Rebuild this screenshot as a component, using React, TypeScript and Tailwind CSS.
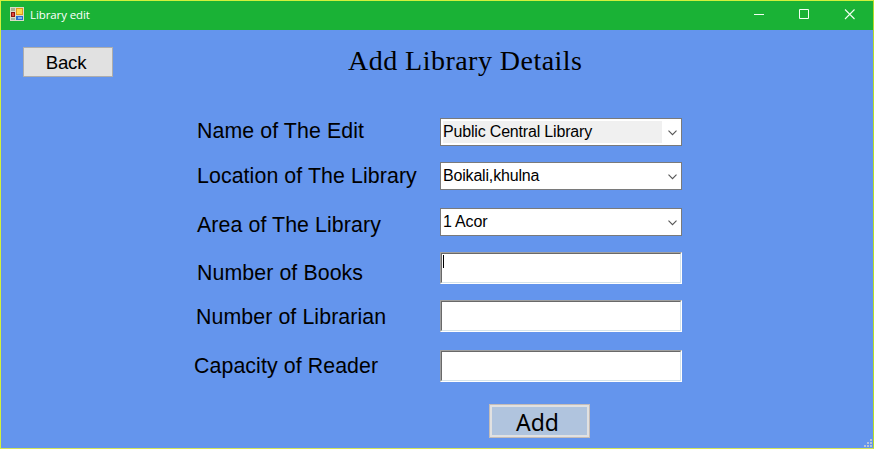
import { ReactNode } from "react";

function AppIcon() {
  return (
    <svg width="14" height="14" viewBox="0 0 14 14" shapeRendering="crispEdges">
      <rect width="14" height="14" fill="#d9dcc8" />
      <rect x="1" y="1" width="4" height="3" fill="#a9b08f" />
      <rect x="6" y="1" width="7" height="7" fill="#e39a1c" />
      <rect x="7" y="2" width="5" height="5" fill="#ffd84a" />
      <rect x="1" y="5" width="4" height="5" fill="#8e1410" />
      <rect x="2" y="6" width="2" height="3" fill="#e0483a" />
      <rect x="6" y="9" width="7" height="4" fill="#2a6fd0" />
      <rect x="8" y="10" width="4" height="2" fill="#7db4f2" />
      <rect x="1" y="11" width="4" height="2" fill="#a3b3a0" />
    </svg>
  );
}

function TitleBar() {
  return (
    <header className="flex h-[29px] shrink-0 items-start bg-[#1ab236] pl-[9px] text-white">
      <div className="pt-[6px]">
        <AppIcon />
      </div>
      <span className="ml-[6px] mt-[5px] font-['Open_Sans','Noto_Sans',sans-serif] text-[11.5px] leading-[18px] tracking-[-0.1px]">
        Library edit
      </span>
      <div className="ml-auto flex pr-[18px] pt-[8px]">
        <svg width="101" height="11" viewBox="0 0 101 11" fill="none" stroke="#f2fff2">
          <path d="M0 5.5H10" />
          <path d="M45.5 0.5h9v9h-9z" />
          <path d="M91 0.5l9.5 9.5M100.5 0.5L91 10" strokeWidth="1.1" />
        </svg>
      </div>
    </header>
  );
}

function Row({ className, label, labelClass, children }: { className: string; label: string; labelClass: string; children: ReactNode }) {
  return (
    <div className={`flex items-start ${className}`}>
      <label className="flex w-[439px] shrink-0">
        <span className={`whitespace-nowrap text-[21.33px] leading-[24px] tracking-[0.09px] ${labelClass}`}>{label}</span>
      </label>
      {children}
    </div>
  );
}

function Combo({ value, active = false }: { value: string; active?: boolean }) {
  return (
    <div className="flex h-[28px] w-[242px] items-center border border-[#7a7a7a] bg-white pl-[2px]">
      <span
        className={`h-[22px] w-[219px] whitespace-nowrap text-[16px] leading-[22px] tracking-[-0.18px] ${active ? "bg-[#f0f0f0]" : ""}`}
      >
        {value}
      </span>
      <svg className="ml-[6px] mt-px" width="9" height="6" viewBox="0 0 9 6" fill="none" stroke="#555">
        <path d="M0.5 0.7L4.5 4.7L8.5 0.7" strokeWidth="1.1" />
      </svg>
    </div>
  );
}

function TextBox({ caret = false }: { caret?: boolean }) {
  return (
    <div className="h-[32px] w-[242px] border border-b-white border-l-[#a0a0a0] border-r-white border-t-[#a0a0a0]">
      <div className="h-full border border-b-[#d5e3ea] border-l-[#696969] border-r-[#d5e3ea] border-t-[#696969] bg-white pl-px pt-px">
        {caret && <div className="h-[13px] w-px bg-black" />}
      </div>
    </div>
  );
}

export default function App() {
  return (
    <main className="flex h-[449px] w-[874px] flex-col overflow-hidden border border-b-[#d4e45a] border-l-[#d2f03c] border-r-[#b6dc28] border-t-[#d2f03c] bg-[#6495ed] font-['Liberation_Sans',Arial,sans-serif] text-black">
      <TitleBar />
      <section className="flex h-[88px] shrink-0 items-start">
        <button className="ml-[22px] mt-[17px] h-[30px] w-[90px] border border-[#adadad] bg-[#e1e1e1] pr-[4px] text-[18.67px] leading-[29px] tracking-[-0.2px]">
          Back
        </button>
        <h1 className="ml-[235px] mt-[14px] whitespace-nowrap font-['Palatino_Linotype',Palatino,P052,'Liberation_Serif',serif] text-[28px] leading-[34px] tracking-[0.47px]">
          Add Library Details
        </h1>
      </section>
      <Row className="h-[44px]" label="Name of The Edit" labelClass="ml-[196px] mt-px">
        <Combo value="Public Central Library" active />
      </Row>
      <Row className="h-[46px]" label="Location of The Library" labelClass="ml-[196px] mt-[2px]">
        <Combo value="Boikali,khulna" />
      </Row>
      <Row className="h-[44px]" label="Area of The Library" labelClass="ml-[196px] mt-[5px]">
        <Combo value="1 Acor" />
      </Row>
      <Row className="h-[48px]" label="Number of Books" labelClass="ml-[196px] mt-[9px]">
        <TextBox caret />
      </Row>
      <Row className="h-[50px]" label="Number of Librarian" labelClass="ml-[195px] mt-[5px]">
        <TextBox />
      </Row>
      <Row className="h-[54px]" label="Capacity of Reader" labelClass="ml-[193px] mt-[4px]">
        <TextBox />
      </Row>
      <footer className="flex flex-1 items-start">
        <button className="ml-[488px] h-[34px] w-[101px] border border-[#c4bcb8] bg-[#e1e1e1] p-[2px]">
          <span className="block h-[28px] bg-[#b0c4de] pr-[4px] font-['Noto_Sans',sans-serif] text-[23px] leading-[30px]">
            Add
          </span>
        </button>
        <svg className="ml-auto self-end" width="10" height="9" viewBox="0 0 10 9" fill="#b8c4d8">
          <path d="M7 0h2v2h-2zM4 3h2v2h-2zM7 3h2v2h-2zM1 6h2v2h-2zM4 6h2v2h-2zM7 6h2v2h-2z" />
        </svg>
      </footer>
    </main>
  );
}
